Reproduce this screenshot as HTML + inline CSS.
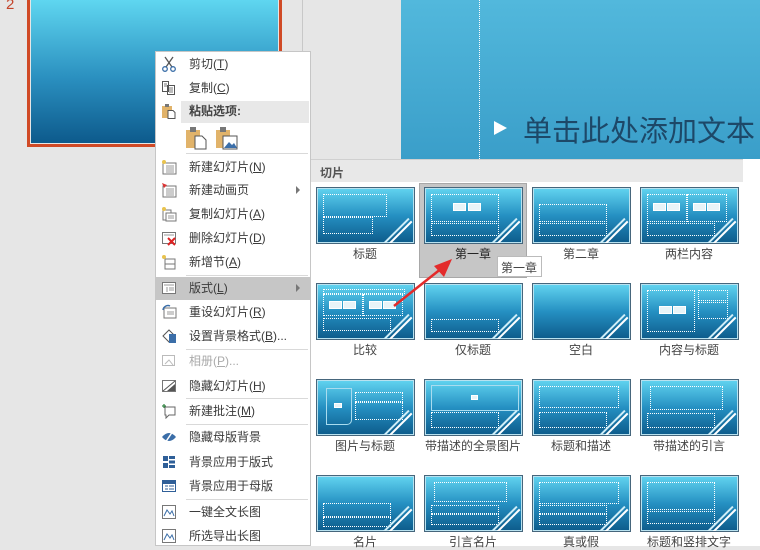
<!DOCTYPE html>
<html><head><meta charset="utf-8"><style>
*{margin:0;padding:0;box-sizing:border-box}
body{width:760px;height:546px;overflow:hidden;background:#e6e6e6;position:relative;font-family:"Liberation Sans","Noto Sans CJK SC",sans-serif;font-size:12px;color:#333}
.abs{position:absolute}
.mi{position:absolute;left:189px;font-size:12px;color:#3a3a3a;line-height:14px}
.ic{position:absolute;left:161px;width:16px;height:16px}
.sep{position:absolute;left:186px;width:122px;height:1px;background:#d9d9d9}
.th{position:absolute;width:99px;height:57px;border:1px solid #46667c;background:linear-gradient(#62d4f0,#2590c2 50%,#0d5b8b);box-shadow:inset 0 0 0 1px #b8e2f0;overflow:hidden}
.th:after{content:"";position:absolute;right:-4px;bottom:6px;width:44px;height:1.5px;background:#fff;transform:rotate(-45deg);box-shadow:0 -4px 0 #cfeef8}
.d{position:absolute;border:1px dotted #fff}
.lb{position:absolute;width:108px;text-align:center;font-size:12px;color:#444}
.ph{position:absolute;width:13px;height:8px;background:#e8f4f8;border:1px solid #fff}
</style></head><body>
<div class="abs" style="left:6px;top:-4px;color:#c4442a;font-size:15px">2</div>
<div class="abs" style="left:27px;top:-3px;width:255px;height:150px;border:3px solid #d04a26"></div>
<div class="abs" style="left:31px;top:0;width:247px;height:143px;background:linear-gradient(#5fd6f0,#2a8fbf 55%,#0d5a8c)"></div>
<div class="abs" style="left:302px;top:0;width:1px;height:160px;background:#c8c8c8"></div>
<div class="abs" style="left:401px;top:0;width:359px;height:159px;background:linear-gradient(#52b8dc,#3a9ec9)"></div>
<div class="abs" style="left:479px;top:0;width:0;height:159px;border-left:1px dotted #fff"></div>
<div class="abs" style="left:494px;top:121px;width:0;height:0;border-left:13px solid #fff;border-top:7px solid transparent;border-bottom:7px solid transparent"></div>
<div class="abs" style="left:523px;top:108px;font-size:29px;color:#1d4868;font-family:'Noto Sans CJK SC',sans-serif;white-space:nowrap">单击此处添加文本</div>
<div class="abs" style="left:310px;top:159px;width:450px;height:387px;background:#fff"></div>
<div class="abs" style="left:310px;top:159px;width:433px;height:23px;background:#e8e8e8;border-top:1px solid #d0d0d0"></div>
<div class="abs" style="left:320px;top:164px;font-size:12px;font-weight:bold;color:#555">切片</div>
<div class="abs" style="left:419px;top:183px;width:108px;height:95px;background:#c6c6c6;border:1px solid #a8a8a8"></div>

<div class="th" style="left:316px;top:187px"><div class="d" style="left:6px;top:6px;width:64px;height:23px"></div><div class="d" style="left:6px;top:29px;width:50px;height:17px"></div></div>
<div class="th" style="left:424px;top:187px"><div class="d" style="left:6px;top:6px;width:68px;height:28px"></div><div class="d" style="left:6px;top:35px;width:68px;height:13px"></div><div class="ph" style="left:28px;top:15px"></div><div class="ph" style="left:43px;top:15px"></div></div>
<div class="th" style="left:532px;top:187px"><div class="d" style="left:6px;top:16px;width:68px;height:18px"></div><div class="d" style="left:6px;top:35px;width:68px;height:13px"></div></div>
<div class="th" style="left:640px;top:187px"><div class="d" style="left:6px;top:6px;width:40px;height:28px"></div><div class="d" style="left:46px;top:6px;width:40px;height:28px"></div><div class="d" style="left:6px;top:35px;width:68px;height:13px"></div><div class="ph" style="left:12px;top:15px"></div><div class="ph" style="left:26px;top:15px"></div><div class="ph" style="left:52px;top:15px"></div><div class="ph" style="left:66px;top:15px"></div></div>
<div class="lb" style="left:311px;top:245px">标题</div>
<div class="lb" style="left:419px;top:245px;color:#222">第一章</div>
<div class="lb" style="left:527px;top:245px">第二章</div>
<div class="lb" style="left:635px;top:245px">两栏内容</div>
<div class="th" style="left:316px;top:283px"><div class="d" style="left:6px;top:5px;width:82px;height:5px"></div><div class="d" style="left:6px;top:10px;width:40px;height:22px"></div><div class="d" style="left:46px;top:10px;width:40px;height:22px"></div><div class="d" style="left:6px;top:34px;width:68px;height:13px"></div><div class="ph" style="left:12px;top:17px"></div><div class="ph" style="left:26px;top:17px"></div><div class="ph" style="left:52px;top:17px"></div><div class="ph" style="left:66px;top:17px"></div></div>
<div class="th" style="left:424px;top:283px"><div class="d" style="left:6px;top:35px;width:68px;height:13px"></div></div>
<div class="th" style="left:532px;top:283px"></div>
<div class="th" style="left:640px;top:283px"><div class="d" style="left:6px;top:6px;width:48px;height:42px"></div><div class="d" style="left:57px;top:6px;width:30px;height:11px"></div><div class="d" style="left:57px;top:18px;width:30px;height:17px"></div><div class="ph" style="left:18px;top:22px"></div><div class="ph" style="left:32px;top:22px"></div></div>
<div class="lb" style="left:311px;top:341px">比较</div>
<div class="lb" style="left:419px;top:341px">仅标题</div>
<div class="lb" style="left:527px;top:341px">空白</div>
<div class="lb" style="left:635px;top:341px">内容与标题</div>
<div class="th" style="left:316px;top:379px"><div class="abs" style="left:9px;top:8px;width:26px;height:37px;border:1px solid #a9dcef;border-radius:0 0 5px 0"></div><div class="d" style="left:38px;top:12px;width:48px;height:10px"></div><div class="d" style="left:38px;top:22px;width:48px;height:18px"></div><div class="ph" style="left:17px;top:23px;width:8px;height:5px"></div></div>
<div class="th" style="left:424px;top:379px"><div class="abs" style="left:6px;top:5px;width:88px;height:26px;border:1px solid #a9dcef"></div><div class="d" style="left:6px;top:32px;width:68px;height:16px"></div><div class="ph" style="left:46px;top:15px;width:7px;height:5px"></div></div>
<div class="th" style="left:532px;top:379px"><div class="d" style="left:6px;top:6px;width:80px;height:22px"></div><div class="d" style="left:6px;top:32px;width:68px;height:16px"></div></div>
<div class="th" style="left:640px;top:379px"><div class="d" style="left:9px;top:6px;width:73px;height:24px"></div><div class="d" style="left:6px;top:33px;width:68px;height:15px"></div></div>
<div class="lb" style="left:311px;top:437px">图片与标题</div>
<div class="lb" style="left:419px;top:437px">带描述的全景图片</div>
<div class="lb" style="left:527px;top:437px">标题和描述</div>
<div class="lb" style="left:635px;top:437px">带描述的引言</div>
<div class="th" style="left:316px;top:475px"><div class="d" style="left:6px;top:27px;width:68px;height:14px"></div><div class="d" style="left:6px;top:41px;width:68px;height:10px"></div></div>
<div class="th" style="left:424px;top:475px"><div class="d" style="left:9px;top:6px;width:73px;height:20px"></div><div class="d" style="left:6px;top:29px;width:68px;height:9px"></div><div class="d" style="left:6px;top:38px;width:68px;height:11px"></div></div>
<div class="th" style="left:532px;top:475px"><div class="d" style="left:6px;top:6px;width:80px;height:22px"></div><div class="d" style="left:6px;top:29px;width:68px;height:9px"></div><div class="d" style="left:6px;top:38px;width:68px;height:11px"></div></div>
<div class="th" style="left:640px;top:475px"><div class="d" style="left:6px;top:6px;width:68px;height:28px"></div><div class="d" style="left:6px;top:35px;width:68px;height:13px"></div></div>
<div class="lb" style="left:311px;top:533px">名片</div>
<div class="lb" style="left:419px;top:533px">引言名片</div>
<div class="lb" style="left:527px;top:533px">真或假</div>
<div class="lb" style="left:635px;top:533px">标题和竖排文字</div>

<div class="abs" style="left:497px;top:256px;width:45px;height:21px;background:#fff;border:1px solid #bbb;font-size:12px;color:#444;padding:2px 0 0 3px">第一章</div>
<svg class="abs" style="left:380px;top:250px" width="80" height="70"><line x1="14" y1="56" x2="62" y2="18" stroke="#e32b2b" stroke-width="2.5"/><polygon points="72,9 54,16 64,27" fill="#e32b2b"/></svg>

<div class="abs" style="left:155px;top:51px;width:156px;height:495px;background:#fff;border:1px solid #c6c6c6"></div>
<div class="abs" style="left:181px;top:101px;width:128px;height:22px;background:#e8e8e8"></div>
<div class="abs" style="left:156px;top:277px;width:154px;height:23px;background:#c6c6c6"></div>
<div class="sep" style="top:153px"></div><div class="sep" style="top:275px"></div><div class="sep" style="top:349px"></div><div class="sep" style="top:398px"></div><div class="sep" style="top:424px"></div><div class="sep" style="top:499px"></div>

<svg class="ic" style="top:56px" viewBox="0 0 16 16"><path d="M4 1L11 11M12 1L5 11" stroke="#555" stroke-width="1.3" fill="none"/><circle cx="4" cy="13" r="2.3" stroke="#3b6ea8" fill="none" stroke-width="1.3"/><circle cx="12" cy="13" r="2.3" stroke="#3b6ea8" fill="none" stroke-width="1.3"/></svg>
<div class="mi" style="top:57px">剪切(<u>T</u>)</div>
<svg class="ic" style="top:80px" viewBox="0 0 16 16"><path d="M1.5 1.5h6v10h-6zM6.5 5.5h7v9h-7z" stroke="#555" fill="#fff"/><path d="M8 8h4M8 10h4M8 12h4M3 4h3M3 6h3" stroke="#777"/></svg>
<div class="mi" style="top:81px">复制(<u>C</u>)</div>
<svg class="ic" style="top:103px" viewBox="0 0 16 16"><rect x="1" y="3" width="10" height="12" fill="#e1b36a"/><rect x="4" y="1" width="4" height="3" fill="#777"/><path d="M7 7.5h5l2 2v6H7z" fill="#fff" stroke="#555"/></svg>
<div class="mi" style="top:104px;font-weight:bold;color:#444">粘贴选项:</div>
<svg class="abs" style="left:185px;top:126px" width="24" height="24" viewBox="0 0 24 24"><rect x="1" y="4" width="14" height="18" fill="#e1b36a"/><rect x="5" y="1" width="6" height="5" fill="#777"/><path d="M10 10h7l4 4v9H10z" fill="#fff" stroke="#555"/></svg>
<svg class="abs" style="left:215px;top:126px" width="24" height="24" viewBox="0 0 24 24"><rect x="1" y="4" width="14" height="18" fill="#e1b36a"/><rect x="5" y="1" width="6" height="5" fill="#777"/><rect x="8" y="10" width="14" height="13" fill="#fff" stroke="#555"/><path d="M9 22l5-6 3 3 2-2 3 5z" fill="#3b6ea8"/></svg>

<svg class="ic" style="top:159px" viewBox="0 0 16 16"><rect x="2" y="4" width="13" height="11" fill="#fff" stroke="#777"/><path d="M5 7h8M5 9h8M5 11h8M5 13h8" stroke="#999"/><circle cx="3" cy="3" r="2" fill="#e9c34e"/></svg>
<div class="mi" style="top:160px">新建幻灯片(<u>N</u>)</div>
<svg class="ic" style="top:182px" viewBox="0 0 16 16"><rect x="2" y="4" width="13" height="11" fill="#fff" stroke="#777"/><path d="M5 7h8M5 9h8M5 11h8M5 13h8" stroke="#999"/><path d="M1 1l5 2-3 3z" fill="#d33"/></svg>
<div class="mi" style="top:183px">新建动画页</div>
<div class="abs" style="left:296px;top:186px;border-left:4px solid #777;border-top:4px solid transparent;border-bottom:4px solid transparent"></div>
<svg class="ic" style="top:206px" viewBox="0 0 16 16"><rect x="2" y="4" width="8" height="10" fill="#fff" stroke="#777"/><rect x="5" y="7" width="10" height="8" fill="#fff" stroke="#777"/><path d="M7 10h6M7 12h6" stroke="#999"/><circle cx="3" cy="3" r="2" fill="#e9c34e"/></svg>
<div class="mi" style="top:207px">复制幻灯片(<u>A</u>)</div>
<svg class="ic" style="top:230px" viewBox="0 0 16 16"><rect x="1.5" y="2.5" width="13" height="11" fill="#fff" stroke="#777"/><path d="M3 5h10" stroke="#999"/><path d="M7 8l7 7M14 8l-7 7" stroke="#d22" stroke-width="2"/></svg>
<div class="mi" style="top:231px">删除幻灯片(<u>D</u>)</div>
<svg class="ic" style="top:254px" viewBox="0 0 16 16"><rect x="4" y="5" width="10" height="10" fill="#fff" stroke="#777"/><path d="M4 10h10" stroke="#777"/><circle cx="3" cy="3" r="2" fill="#e9c34e"/></svg>
<div class="mi" style="top:255px">新增节(<u>A</u>)</div>

<svg class="ic" style="top:280px" viewBox="0 0 16 16"><rect x="1.5" y="2.5" width="13" height="11" fill="#fff" stroke="#777"/><path d="M3 5h10M6 7v5M8 8h5M8 10h5" stroke="#999"/></svg>
<div class="mi" style="top:281px">版式(<u>L</u>)</div>
<div class="abs" style="left:296px;top:284px;border-left:4px solid #777;border-top:4px solid transparent;border-bottom:4px solid transparent"></div>
<svg class="ic" style="top:304px" viewBox="0 0 16 16"><rect x="3" y="4" width="12" height="10" fill="#fff" stroke="#777"/><path d="M2 6a5 5 0 0 1 7-4" stroke="#3b6ea8" stroke-width="1.5" fill="none"/><path d="M6 8h7M6 10h7" stroke="#999"/></svg>
<div class="mi" style="top:305px">重设幻灯片(<u>R</u>)</div>
<svg class="ic" style="top:328px" viewBox="0 0 16 16"><path d="M2 8l6-6 6 6-6 6z" fill="#fff" stroke="#555"/><rect x="8" y="6" width="7" height="9" fill="#3b6ea8"/></svg>
<div class="mi" style="top:329px">设置背景格式(<u>B</u>)...</div>
<svg class="ic" style="top:353px" viewBox="0 0 16 16"><rect x="1.5" y="2.5" width="12" height="10" fill="#fff" stroke="#bbb"/><path d="M4 11l4-4 4 5" stroke="#bbb" fill="none"/></svg>
<div class="mi" style="top:354px;color:#aaa">相册(<u>P</u>)...</div>
<svg class="ic" style="top:378px" viewBox="0 0 16 16"><rect x="1.5" y="2.5" width="13" height="11" fill="#fff" stroke="#777"/><path d="M2 13L14 3" stroke="#555"/><path d="M6 13l8-7v7z" fill="#555"/></svg>
<div class="mi" style="top:379px">隐藏幻灯片(<u>H</u>)</div>
<svg class="ic" style="top:403px" viewBox="0 0 16 16"><path d="M4 4h10v8H8l-3 3v-3H4z" fill="#fff" stroke="#666"/><path d="M1 3h4M3 1v4" stroke="#3a8a4a" stroke-width="1.3"/></svg>
<div class="mi" style="top:404px">新建批注(<u>M</u>)</div>
<svg class="ic" style="top:429px" viewBox="0 0 16 16"><path d="M1 8q7-8 14 0q-7 8-14 0z" fill="#3b6ea8"/><path d="M4 14L12 2" stroke="#fff" stroke-width="1.5"/></svg>
<div class="mi" style="top:430px">隐藏母版背景</div>
<svg class="ic" style="top:454px" viewBox="0 0 16 16"><rect x="2" y="2" width="5" height="5" fill="#2f5f98"/><rect x="2" y="9" width="5" height="5" fill="#2f5f98"/><rect x="8" y="2" width="6" height="3" fill="#2f5f98"/><rect x="8" y="6.5" width="6" height="3" fill="#2f5f98"/><rect x="8" y="11" width="6" height="3" fill="#2f5f98"/></svg>
<div class="mi" style="top:455px">背景应用于版式</div>
<svg class="ic" style="top:478px" viewBox="0 0 16 16"><rect x="1.5" y="2.5" width="13" height="11" fill="#fff" stroke="#2f5f98"/><rect x="2" y="3" width="12" height="3" fill="#2f5f98"/><path d="M4 8h3M8 8h5M4 11h3M8 11h5" stroke="#2f5f98"/></svg>
<div class="mi" style="top:479px">背景应用于母版</div>
<svg class="ic" style="top:504px" viewBox="0 0 16 16"><rect x="1.5" y="1.5" width="13" height="13" fill="#fff" stroke="#777"/><path d="M3 12l3-6 3 4 2-3 2 5" stroke="#3b6ea8" fill="none"/></svg>
<div class="mi" style="top:505px">一键全文长图</div>
<svg class="ic" style="top:528px" viewBox="0 0 16 16"><rect x="1.5" y="1.5" width="13" height="13" fill="#fff" stroke="#777"/><path d="M3 12l3-6 3 4 2-3 2 5" stroke="#3b6ea8" fill="none"/></svg>
<div class="mi" style="top:529px">所选导出长图</div>
</body></html>
